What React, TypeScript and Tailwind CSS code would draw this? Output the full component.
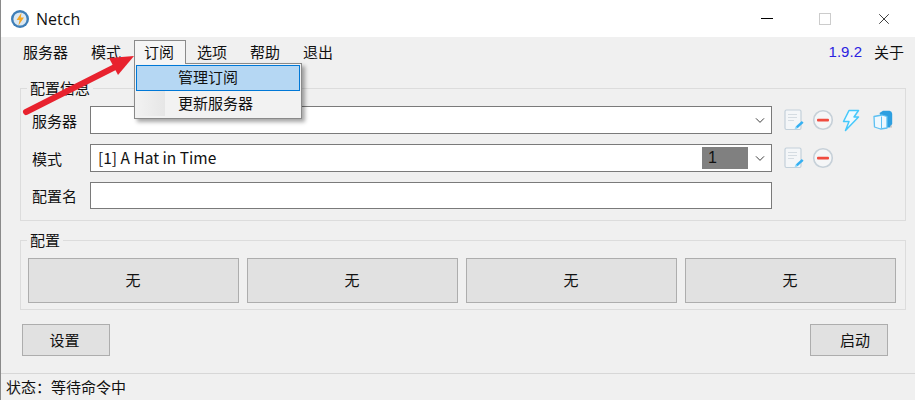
import { ChevronDown, X } from "lucide-react";

const uiFont = "font-['Noto_Sans_CJK_SC','Liberation_Sans',sans-serif]";

const menus = [
  { label: "服务器", cls: "ml-[22px] w-[68px]" },
  { label: "模式", cls: "w-[43px]" },
];
const menusAfter = [
  { label: "选项", cls: "ml-[11px] w-[53px]" },
  { label: "帮助", cls: "w-[53px]" },
  { label: "退出", cls: "w-[40px]" },
];

function Logo() {
  return (
    <svg width="20" height="20" viewBox="0 0 20 20" className="shrink-0">
      <circle cx="10" cy="10" r="9" fill="#3f7fb8" />
      <circle cx="10" cy="10" r="6.6" fill="#dbe8f2" />
      <path d="M11.5 3.8 6.6 11h3l-1.2 5.4L14 8.6h-3.2z" fill="#f5a623" />
    </svg>
  );
}

function EditIcon() {
  return (
    <svg width="22" height="22" viewBox="0 0 22 22" className="shrink-0">
      <path d="M2 2.5A1.5 1.5 0 0 1 3.5 1h13A1.5 1.5 0 0 1 18 2.5V19a1.5 1.5 0 0 1-1.500 1.500h-13A1.500 1.500 0 0 1 2 19z" fill="#f4f6f8" stroke="#c3d0da" strokeWidth="1.200" />
      <path d="M5 5.500h9M5 8.500h9M5 11.500h6" stroke="#d5dce2" strokeWidth="1.200" />
      <path d="M12.500 19.500l.8-2.500 5.500-5 1.800 1.800-5.500 5z" fill="#35b0f2" />
      <path d="M11.500 20.500l1-3.200 2.200 2.200z" fill="#9adcfb" />
    </svg>
  );
}

function RemoveIcon() {
  return (
    <svg width="22" height="22" viewBox="0 0 22 22" className="shrink-0">
      <circle cx="11" cy="11" r="9.300" fill="#f5f6f7" stroke="#c6d0d8" strokeWidth="1.600" />
      <rect x="5" y="9.700" width="12" height="2.800" rx="1" fill="#f04b3f" />
    </svg>
  );
}

function BoltIcon() {
  return (
    <svg width="20" height="23" viewBox="0 0 20 23" className="shrink-0">
      <path d="M8 1.500h9.500l-4.500 6.500h4.500L4.500 21.500l3.500-9H2.500z" fill="#eefaff" stroke="#45c8fb" strokeWidth="1.500" strokeLinejoin="round" />
    </svg>
  );
}

function CopyIcon() {
  return (
    <svg width="20" height="20" viewBox="0 0 20 20" className="shrink-0">
      <path d="M6.500 3 10 .8h6.500q2.500.5 2.700 3V14l-2.500 3.500H14V6.500H8z" fill="#2d9fe0" />
      <path d="M17 17.500h2l-1-3z" fill="#b8b8b8" />
      <path d="M1 6.500 9 5l5 1.500v11.500L7.500 19 1.500 17z" fill="#eef8fe" stroke="#5cc0f2" strokeWidth="1.300" strokeLinejoin="round" />
      <path d="M8.500 6.500V18" stroke="#5cc0f2" strokeWidth="1" />
    </svg>
  );
}

function ComboBox({ children }: { children?: React.ReactNode }) {
  return (
    <div className="h-[28px] w-[682px] shrink-0 bg-white border border-[#7a7a7a] flex items-center pl-[7px] text-[15.5px] text-[#111]">
      <div className="flex-1 flex items-center min-w-0">{children}</div>
      <ChevronDown size={15} strokeWidth={1.400} className="w-[18px] mr-[2px] text-[#222]" />
    </div>
  );
}

function FormRow({ label, children, className }: { label: string; children: React.ReactNode; className?: string }) {
  return (
    <div className={`flex items-center ${className ?? ""}`}>
      <span className="w-[58px] pl-[11px] text-[15px] leading-none shrink-0 whitespace-nowrap">{label}</span>
      <div className="ml-[11px] flex items-center">{children}</div>
    </div>
  );
}

function ProfileButton() {
  return (
    <button className="h-[45px] flex-1 bg-[#e1e1e1] border border-[#adadad] pr-[1px] text-[15px]">无</button>
  );
}

export default function App() {
  return (
    <div className={`relative w-[915px] h-[400px] overflow-hidden bg-[#f0f0f0] flex flex-col text-[#111] border-l border-[#8a8a8a] ${uiFont}`}>
      <div className="h-[37px] bg-white flex items-center shrink-0">
        <div className="ml-[9px] mr-[6px]"><Logo /></div>
        <span className="text-[16px] font-['Open_Sans',sans-serif] text-[#111]">Netch</span>
        <div className="ml-auto flex items-center">
          <div className="w-[12px] h-px bg-black mr-[46px]" />
          <div className="w-[12px] h-[12px] border border-[#ccc] mr-[44px]" />
          <X size={18} strokeWidth={1} className="mr-[22px] text-black" />
        </div>
      </div>

      <div className="h-[30px] flex items-center shrink-0 text-[15px]">
        {menus.map((m) => (
          <span key={m.label} className={`${m.cls} shrink-0`}>{m.label}</span>
        ))}
        <span className="relative w-[52px] h-[24px] self-start mt-[3px] border border-b-0 border-[#8a8a8a] bg-[#f5f5f5] pr-[2px] flex items-center justify-center shrink-0 z-20">订阅</span>
        {menusAfter.map((m) => (
          <span key={m.label} className={`${m.cls} shrink-0`}>{m.label}</span>
        ))}
        <span className="ml-auto text-[15px] font-['Liberation_Sans',sans-serif] text-[#2a22e0]">1.9.2</span>
        <span className="ml-[12px] mr-[11px]">关于</span>
      </div>

      <div className="flex-1 flex flex-col px-[19px]">
        <fieldset className="border border-[#dcdcdc] h-[143px] mt-[11px] w-[886px]">
          <legend className="ml-[6px] px-[3px] text-[15px] leading-[20px]">配置信息</legend>
          <FormRow label="服务器" className="mt-[8px]">
            <ComboBox />
            <div className="ml-[11px] flex items-center gap-[7px]">
              <EditIcon />
              <RemoveIcon />
              <BoltIcon />
              <div className="ml-[5px]"><CopyIcon /></div>
            </div>
          </FormRow>
          <FormRow label="模式" className="mt-[10px]">
            <ComboBox>
              <span className="flex-1">[1] A Hat in Time</span>
              <span className="w-[46px] h-[22px] mr-[3px] bg-[#808080] pl-[6px] text-[16px] leading-[22px] font-['Liberation_Sans',sans-serif]">1</span>
            </ComboBox>
            <div className="ml-[11px] flex items-center gap-[7px]">
              <EditIcon />
              <RemoveIcon />
            </div>
          </FormRow>
          <FormRow label="配置名" className="mt-[10px]">
            <div className="h-[27px] w-[682px] bg-white border border-[#7a7a7a]" />
          </FormRow>
        </fieldset>

        <fieldset className="border border-[#dcdcdc] h-[80px] mt-[9px] w-[886px]">
          <legend className="ml-[6px] px-[3px] text-[15px] leading-[20px]">配置</legend>
          <div className="flex gap-[8px] pl-[7px] pr-[9px] mt-[8px]">
            <ProfileButton />
            <ProfileButton />
            <ProfileButton />
            <ProfileButton />
          </div>
        </fieldset>

        <div className="flex justify-between pl-[2px] pr-[8px] mt-[14px]">
          <button className="w-[88px] h-[32px] bg-[#e1e1e1] border border-[#adadad] pr-[3px] text-[15px]">设置</button>
          <button className="w-[78px] h-[32px] bg-[#e1e1e1] border border-[#adadad] pl-[12px] text-[15px]">启动</button>
        </div>
      </div>

      <div className="h-[27px] border-t border-[#d7d7d7] pl-[5px] flex items-center text-[15px] shrink-0">状态：等待命令中</div>

      {/* open menu */}
      <div className="absolute left-[133px] top-[63px] w-[168px] h-[56px] z-10 bg-[#f2f2f2] border border-[#8a8a8a] shadow-[3px_3px_4px_rgba(0,0,0,0.35)] p-px flex flex-col text-[15px]">
        <div className="h-[26px] bg-[#b5d7f3] border border-[#0078d7] pl-[41px] pb-[2px] flex items-center">管理订阅</div>
        <div className="h-[25px] flex items-stretch">
          <div className="w-[29px] bg-gradient-to-r from-[#f2f2f2] to-[#e6e6e6]" />
          <span className="ml-[13px] flex items-center">更新服务器</span>
        </div>
      </div>

      {/* annotation arrow */}
      <svg className="absolute left-0 top-0 z-30 pointer-events-none" width="915" height="400" viewBox="0 0 915 400">
        <path d="M25 112 116 66" stroke="#e8222e" strokeWidth="6" strokeLinecap="round" />
        <path d="M133 56 108 58 117 75z" fill="#e8222e" />
      </svg>
    </div>
  );
}
